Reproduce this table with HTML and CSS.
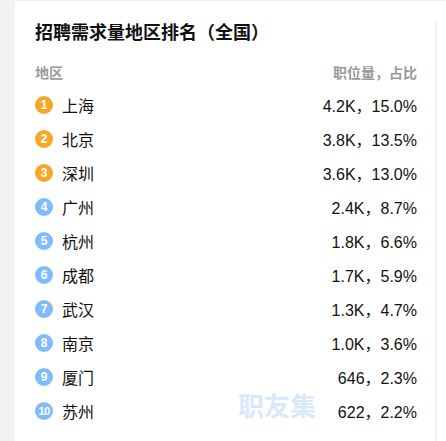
FILE: index.html
```html
<!DOCTYPE html>
<html lang="zh">
<head>
<meta charset="utf-8">
<title>招聘需求量地区排名</title>
<link rel="stylesheet" href="styles.css">
</head>
<body>
<div class="card">
  <div class="panel">
    <h2 class="title">招聘需求量地区排名（全国）</h2>
    <div class="head">
      <span>地区</span>
      <span>职位量，占比</span>
    </div>
    <ul class="list">
      <li class="row"><span class="rank top">1</span><span class="city">上海</span><span class="val">4.2K，15.0%</span></li>
      <li class="row"><span class="rank top">2</span><span class="city">北京</span><span class="val">3.8K，13.5%</span></li>
      <li class="row"><span class="rank top">3</span><span class="city">深圳</span><span class="val">3.6K，13.0%</span></li>
      <li class="row"><span class="rank">4</span><span class="city">广州</span><span class="val">2.4K，8.7%</span></li>
      <li class="row"><span class="rank">5</span><span class="city">杭州</span><span class="val">1.8K，6.6%</span></li>
      <li class="row"><span class="rank">6</span><span class="city">成都</span><span class="val">1.7K，5.9%</span></li>
      <li class="row"><span class="rank">7</span><span class="city">武汉</span><span class="val">1.3K，4.7%</span></li>
      <li class="row"><span class="rank">8</span><span class="city">南京</span><span class="val">1.0K，3.6%</span></li>
      <li class="row"><span class="rank">9</span><span class="city">厦门</span><span class="val">646，2.3%</span></li>
      <li class="row"><span class="rank small">10</span><span class="city">苏州</span><span class="val">622，2.2%</span></li>
    </ul>
    <div class="watermark">职友集</div>
  </div>
  <div class="divider"></div>
  <div class="rest"></div>
</div>
</body>
</html>
```
FILE: styles.css
```css
html, body {
  margin: 0;
  padding: 0;
}
body {
  background: #f2f2f2;
  font-family: "Liberation Sans", "Noto Sans CJK SC", sans-serif;
  color: #1a1a1a;
  height: 441px;
  overflow: hidden;
}
.card {
  margin: 1px 0 0 15px;
  background: #fff;
  display: flex;
  height: 460px;
}
.panel {
  position: relative;
  width: 382px;
  padding: 20px 18px 0 20px;
}
.title {
  margin: 0;
  font-size: 18px;
  line-height: 24px;
  font-weight: bold;
  color: #111;
}
.head {
  margin-top: 18px;
  display: flex;
  justify-content: space-between;
  font-size: 14px;
  line-height: 20px;
  font-weight: bold;
  color: #9a9a9a;
}
.list {
  list-style: none;
  margin: 5px 0 0;
  padding: 0;
}
.row {
  height: 34px;
  display: flex;
  align-items: center;
  font-size: 16px;
  color: #111;
}
.rank {
  width: 18px;
  height: 18px;
  border-radius: 50%;
  background: #80bcfb;
  color: #fff;
  font-size: 12px;
  font-weight: bold;
  display: flex;
  align-items: center;
  justify-content: center;
  flex: none;
}
.rank.top {
  background: #f6a72a;
}
.rank.small {
  font-size: 11px;
  letter-spacing: -0.5px;
}
.city {
  margin-left: 9px;
}
.val {
  margin-left: auto;
}
.watermark {
  position: absolute;
  left: 223px;
  top: 387px;
  font-size: 26px;
  font-weight: bold;
  color: #d9e9fb;
  font-family: "Noto Sans CJK SC", sans-serif;
  line-height: 34px;
}
.divider {
  width: 2px;
  margin-top: 20px;
  background: #efefef;
  flex: none;
}
.rest {
  flex: 1;
}
```
